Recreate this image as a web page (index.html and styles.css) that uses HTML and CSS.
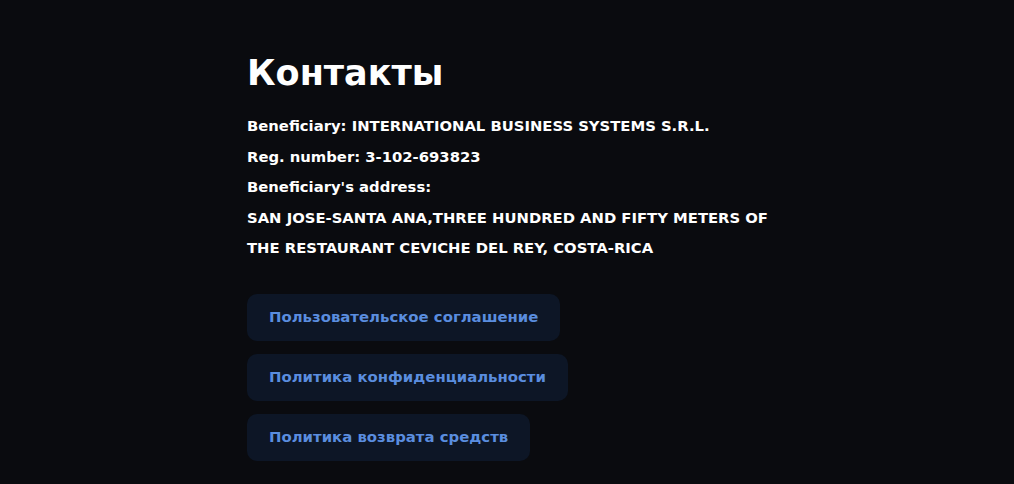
FILE: index.html
```html
<!DOCTYPE html>
<html lang="ru">
<head>
<meta charset="utf-8">
<link rel="stylesheet" href="styles.css">
</head>
<body>
<main class="contacts">
  <h1 class="title">Контакты</h1>
  <div class="info">
    <p>Beneficiary: INTERNATIONAL BUSINESS SYSTEMS S.R.L.</p>
    <p>Reg. number: 3-102-693823</p>
    <p>Beneficiary's address:</p>
    <p>SAN JOSE-SANTA ANA,THREE HUNDRED AND FIFTY METERS OF</p>
    <p>THE RESTAURANT CEVICHE DEL REY, COSTA-RICA</p>
  </div>
  <nav class="links">
    <a class="link" href="#">Пользовательское соглашение</a>
    <a class="link" href="#">Политика конфиденциальности</a>
    <a class="link" href="#">Политика возврата средств</a>
  </nav>
</main>
</body>
</html>
```

FILE: styles.css
```css
html, body {
  margin: 0;
  padding: 0;
  background: #0a0b0f;
  height: 100%;
}
body {
  font-family: "DejaVu Sans", "Open Sans", sans-serif;
  color: #ffffff;
}
.contacts {
  padding: 50px 0 0 247px;
  display: flex;
  flex-direction: column;
  align-items: flex-start;
}
.title {
  margin: 0;
  font-size: 35px;
  font-weight: 700;
  line-height: 46px;
  letter-spacing: 0;
}
.info {
  margin-top: 15px;
  font-size: 14.8px;
  font-weight: 700;
  line-height: 30.5px;
}
.info p {
  margin: 0;
}
.links {
  margin-top: 30px;
  display: flex;
  flex-direction: column;
  align-items: flex-start;
  gap: 13px;
}
.link {
  display: block;
  background: #0d1626;
  color: #5a8ddf;
  text-decoration: none;
  font-size: 14.9px;
  font-weight: 700;
  line-height: 47px;
  padding: 0 22px;
  border-radius: 10px;
}
```
